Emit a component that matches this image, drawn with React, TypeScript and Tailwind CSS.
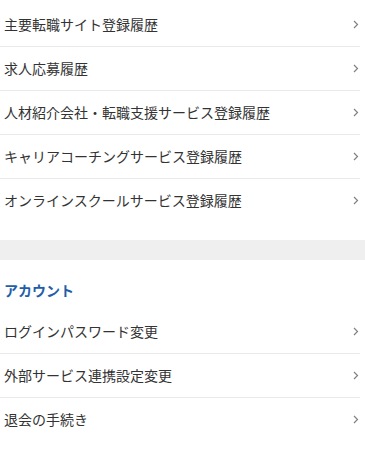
const HISTORY = [
  "主要転職サイト登録履歴",
  "求人応募履歴",
  "人材紹介会社・転職支援サービス登録履歴",
  "キャリアコーチングサービス登録履歴",
  "オンラインスクールサービス登録履歴",
];

const ACCOUNT = ["ログインパスワード変更", "外部サービス連携設定変更", "退会の手続き"];

function Chevron() {
  return (
    <svg width="6" height="9" viewBox="0 0 6 9" fill="none" aria-hidden>
      <path d="M1 1l3.5 3.5L1 8" stroke="#808080" strokeWidth="1.2" />
    </svg>
  );
}

function MenuList({ items }: { items: string[] }) {
  return (
    <ul className="mr-[5px]">
      {items.map((label) => (
        <li
          key={label}
          className="flex h-[44px] items-center justify-between border-b border-[#e9e9e9] pl-1 pr-[1px] last:h-[43px] last:border-b-0"
        >
          <span className="text-[14px] text-[#333333]">{label}</span>
          <Chevron />
        </li>
      ))}
    </ul>
  );
}

export default function App() {
  return (
    <div
      className="w-[365px] bg-white pt-[3px]"
      style={{ fontFamily: '"Noto Sans CJK JP", "Noto Sans", sans-serif' }}
    >
      <MenuList items={HISTORY} />
      <div className="mt-[18px] h-[20px] bg-[#efefef]" />
      <h2 className="h-[50px] pl-1 pt-[20px] text-[14px] font-bold leading-[20px] text-[#1f5ea8]">
        アカウント
      </h2>
      <MenuList items={ACCOUNT} />
    </div>
  );
}
